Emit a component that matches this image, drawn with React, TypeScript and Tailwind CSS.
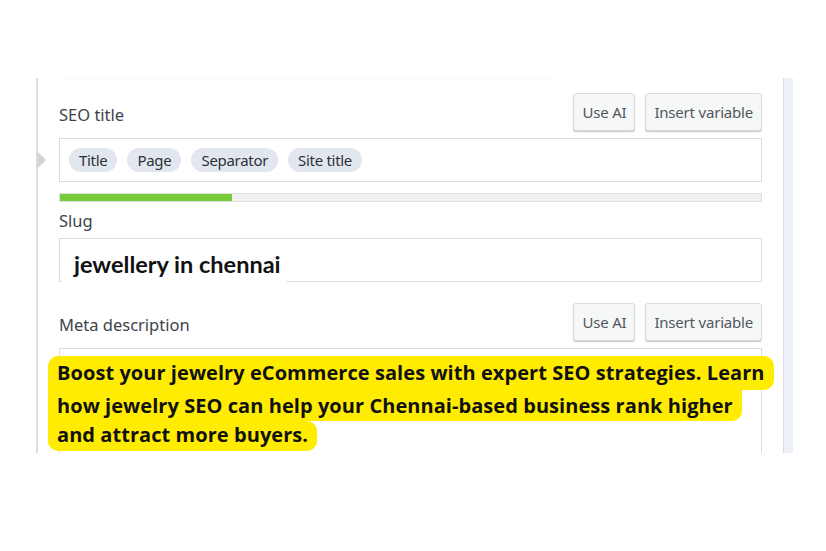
import React from 'react';

function ActionButtons() {
  return (
    <div className="flex gap-[10px]">
      <button className="h-[38px] px-[8px] rounded-[3px] border border-[#dcdcde] bg-[#f6f7f7] shadow-[0_1px_1px_#c3c4c7] text-[15px] tracking-[-0.2px] text-[#50575e]">
        Use AI
      </button>
      <button className="h-[38px] px-[8px] rounded-[3px] border border-[#dcdcde] bg-[#f6f7f7] shadow-[0_1px_1px_#c3c4c7] text-[15px] tracking-[-0.2px] text-[#50575e]">
        Insert variable
      </button>
    </div>
  );
}

function Chip({ label }: { label: string }) {
  return (
    <span className="h-[24px] px-[10px] flex items-center rounded-full bg-[#e2e7ef] text-[15px] tracking-[-0.3px] text-[#2c3338]">
      {label}
    </span>
  );
}

export default function App() {
  return (
    <div className="w-[826px] h-[551px] bg-white pt-[78px] pl-[36px] font-['Noto_Sans',sans-serif] text-[#3c434a]">
      <div className="flex h-[375px] w-[757px]">
        {/* left rail */}
        <div className="relative w-[2px] bg-[#dcdcde]">
          <div className="absolute left-[2px] top-[74px] w-0 h-0 border-y-[8px] border-y-transparent border-l-[8px] border-l-[#d4d4d4]" />
        </div>

        {/* content */}
        <div className="flex-1 pl-[21px] pr-[21px] pt-[15px] flex flex-col">
          <div className="absolute left-[65px] top-[78px] w-[485px] h-px bg-[#f7f7f7]" />

          <div className="flex items-center justify-between h-[38px]">
            <span className="text-[16.5px] pt-[7px]">SEO title</span>
            <ActionButtons />
          </div>

          <div className="mt-[7px] h-[44px] border border-[#dcdcde] flex items-center gap-[10px] px-[9px]">
            <Chip label="Title" />
            <Chip label="Page" />
            <Chip label="Separator" />
            <Chip label="Site title" />
          </div>

          <div className="mt-[11px] h-[9px] border border-[#e0e0e0] bg-[#f0f0f1]">
            <div className="h-full w-[172px] bg-[#77cc38]" />
          </div>

          <span className="mt-[7px] text-[16.5px] leading-[24px]">Slug</span>

          <div className="relative mt-[5px] h-[44px] border border-[#dcdcde]">
            <div className="absolute left-[2px] top-[7px] w-[224px] h-[37px] bg-white pl-[12px] flex items-center">
              <span className="font-['Lato',sans-serif] font-bold text-[23.5px] text-[#111]">
                jewellery in chennai
              </span>
            </div>
          </div>

          <div className="mt-[21px] flex items-center justify-between h-[38px]">
            <span className="text-[16.5px] pt-[7px]">Meta description</span>
            <ActionButtons />
          </div>

          <div className="relative mt-[7px] flex-1 border-x border-t border-[#dcdcde]">
            <div className="absolute left-[-12px] top-[7px] flex flex-col items-start font-['Open_Sans',sans-serif] font-bold text-[20px] tracking-[0.06px] text-[#111] whitespace-nowrap">
              <div className="h-[34px] leading-[34px] px-[9px] bg-[#ffec00] rounded-t-[10px] rounded-br-[10px]">
                Boost your jewelry eCommerce sales with expert SEO strategies. Learn
              </div>
              <div className="h-[31px] leading-[31px] px-[9px] bg-[#ffec00] rounded-br-[10px]">
                how jewelry SEO can help your Chennai-based business rank higher
              </div>
              <div className="h-[30px] leading-[28px] px-[9px] bg-[#ffec00] rounded-b-[10px] rounded-tr-[10px]">
                and attract more buyers.
              </div>
            </div>
          </div>
        </div>

        {/* right rail */}
        <div className="w-px bg-[#dcdcde]" />
        <div className="w-[9px] bg-[#eef0f8]" />
      </div>
    </div>
  );
}
